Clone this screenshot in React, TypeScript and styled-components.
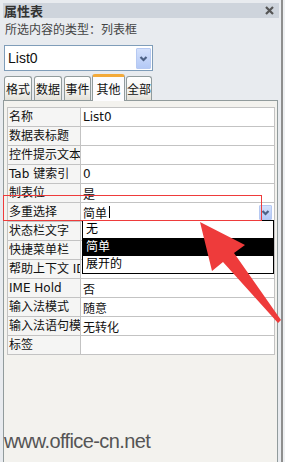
import React from 'react';
import styled, { createGlobalStyle } from 'styled-components';

const ui = {
  chrome: '#e8ebef',
  title: '#ced4dc',
  panel: '#f3f2ee',
  grid: '#c3c3c3',
  tabBorder: '#919b9c',
  red: '#ee3b3b',
  text: '#111',
  font: '"DejaVu Sans", "Noto Sans CJK SC", sans-serif',
  cjk: '"Noto Sans CJK SC", sans-serif',
};

const GlobalStyle = createGlobalStyle`
  body {
    margin: 0;
    background: ${ui.chrome};
  }
`;

const tabs = [
  { name: '格式', w: 28 },
  { name: '数据', w: 28 },
  { name: '事件', w: 27 },
  { name: '其他', w: 33, active: true },
  { name: '全部', w: 26 },
];

const rows: [string, string][] = [
  ['名称', 'List0'],
  ['数据表标题', ''],
  ['控件提示文本', ''],
  ['Tab 键索引', '0'],
  ['制表位', '是'],
  ['多重选择', '简单'],
  ['状态栏文字', ''],
  ['快捷菜单栏', ''],
  ['帮助上下文 ID', ''],
  ['IME Hold', '否'],
  ['输入法模式', '随意'],
  ['输入法语句模式', '无转化'],
  ['标签', ''],
];

const options = ['无', '简单', '展开的'];

const Chevron = ({ w, h }: { w: number; h: number }) => (
  <svg width={w} height={h} viewBox={`0 0 ${w} ${h}`}>
    <path
      d={`M${w / 2 - 3} ${h / 2 - 1.5} L${w / 2} ${h / 2 + 1.5} L${w / 2 + 3} ${h / 2 - 1.5}`}
      fill="none"
      stroke="#4d6185"
      strokeWidth="2.2"
    />
  </svg>
);

const App = () => {
  return (
    <>
      <GlobalStyle />
      <Frame>
        <Main>
          <TitleBar>
            <span>属性表</span>
            <svg width="9" height="9" viewBox="0 0 9 9">
              <path d="M1 1 L8 8 M8 1 L1 8" stroke="#555" strokeWidth="2.2" />
            </svg>
          </TitleBar>
          <TypeLabel>所选内容的类型：列表框</TypeLabel>
          <Combo>
            <span>List0</span>
            <ComboButton>
              <Chevron w={13} h={19} />
            </ComboButton>
          </Combo>
          <TabStrip>
            {tabs.map((t) => (
              <Tab key={t.name} $w={t.w} $active={!!t.active}>
                {t.name}
              </Tab>
            ))}
          </TabStrip>
          <Panel>
            <PropGrid>
              {rows.map(([label, value]) => (
                <React.Fragment key={label}>
                  <Label>{label}</Label>
                  {label === '多重选择' ? (
                    <Value>
                      {value}
                      <Caret />
                      <DropButton>
                        <Chevron w={11} h={13} />
                      </DropButton>
                      <DropList>
                        {options.map((o) => (
                          <DropItem key={o} $selected={o === value}>
                            {o}
                          </DropItem>
                        ))}
                      </DropList>
                    </Value>
                  ) : (
                    <Value>{value}</Value>
                  )}
                </React.Fragment>
              ))}
            </PropGrid>
          </Panel>
        </Main>
        <EdgeLine />
        <EdgeFill />

        <Highlight />
        <Pointer width="285" height="462" viewBox="0 0 285 462">
          <polygon
            points="200,222 245,245 234,253 281,320 278,323 223,262 212,271"
            fill={ui.red}
          />
        </Pointer>
        <Watermark>www.office-cn.net</Watermark>
      </Frame>
    </>
  );
};

export default App;

const Frame = styled.div`
  position: relative;
  display: flex;

  width: 285px;
  height: 462px;
  overflow: hidden;

  background: ${ui.chrome};
  font-family: ${ui.font};
  color: ${ui.text};
`;

const Main = styled.div`
  display: flex;
  flex-direction: column;
  width: 281px;
`;

const EdgeLine = styled.div`
  width: 2px;
  background: #8e8e8e;
`;

const EdgeFill = styled.div`
  flex: 1;
  background: #eef0f2;
`;

const TitleBar = styled.div`
  display: flex;
  align-items: center;
  justify-content: space-between;
  box-sizing: border-box;

  width: 276px;
  height: 15px;
  margin: 3px 0 0 3px;
  padding: 0 5px 0 1px;

  background: ${ui.title};
  font-family: ${ui.cjk};
  font-size: 13px;
  font-weight: 700;
  color: #333;
`;

const TypeLabel = styled.div`
  height: 24px;
  padding-left: 5px;

  font-size: 12px;
  line-height: 24px;
  color: #444;
`;

const Combo = styled.div`
  display: flex;
  align-items: center;
  justify-content: space-between;
  box-sizing: border-box;

  width: 149px;
  height: 26px;
  margin: 3px 0 0 4px;
  padding: 0 1px 0 3px;

  border: 1px solid #7f9db9;
  background: #fff;
  font-family: 'Liberation Sans', sans-serif;
  font-size: 14px;
`;

const ComboButton = styled.div`
  display: flex;
  box-sizing: border-box;
  width: 15px;
  height: 21px;

  border: 1px solid #b6c9f2;
  border-radius: 1px;
  background: linear-gradient(#d4e1fc, #b4c9f6);
`;

const TabStrip = styled.div`
  position: relative;
  z-index: 1;
  display: flex;
  align-items: flex-end;

  height: 27px;
  margin: 3px 0 -1px 4px;
`;

const Tab = styled.div<{ $w: number; $active: boolean }>`
  display: flex;
  align-items: center;
  justify-content: center;
  box-sizing: border-box;

  width: ${(p) => p.$w}px;
  height: ${(p) => (p.$active ? 27 : 24)}px;
  margin: ${(p) => (p.$active ? '0 1px 0 -1px' : '0 2px 1px 0')};
  padding-bottom: ${(p) => (p.$active ? 1 : 0)}px;

  border: 1px solid ${ui.tabBorder};
  border-bottom: none;
  border-top: ${(p) => (p.$active ? '3px solid #f3aa3a' : `1px solid ${ui.tabBorder}`)};
  border-radius: 3px 3px 0 0;
  background: ${(p) =>
    p.$active ? '#fcfcfe' : 'linear-gradient(#ffffff, #f4f3ef 60%, #e3e1d9)'};

  font-size: 12px;
`;

const Panel = styled.div`
  flex: 1;
  box-sizing: border-box;
  width: 275px;
  margin-left: 3px;
  padding: 6px 2px 0 3px;

  border: 1px solid ${ui.tabBorder};
  border-bottom: none;
  background: ${ui.panel};
`;

const PropGrid = styled.div`
  display: grid;
  grid-template-columns: 72px 1fr;
  gap: 1px;

  border: 1px solid ${ui.grid};
  background: ${ui.grid};
`;

const Label = styled.div`
  height: 18px;
  padding-left: 1px;
  overflow: hidden;

  background: #f5f5f4;
  font-size: 12px;
  line-height: 18px;
  white-space: nowrap;
`;

const Value = styled.div`
  position: relative;
  display: flex;
  align-items: center;

  height: 18px;
  padding-left: 2px;

  background: #fff;
  font-size: 12px;
  white-space: nowrap;
`;

const Caret = styled.span`
  width: 1px;
  height: 12px;
  margin-left: 2px;
  background: #000;
`;

const DropButton = styled.div`
  display: flex;
  box-sizing: border-box;
  width: 13px;
  height: 15px;
  margin: 0 2px 0 auto;

  border: 1px solid #b6c9f2;
  border-radius: 1px;
  background: linear-gradient(#d4e1fc, #b4c9f6);
`;

const DropList = styled.div`
  position: absolute;
  left: 1px;
  top: 17px;
  z-index: 2;
  width: 190px;

  border: 1px solid #000;
  background: #fff;
`;

const DropItem = styled.div<{ $selected: boolean }>`
  height: ${(p) => (p.$selected ? 18 : 17)}px;
  padding-left: 3px;

  font-size: 12px;
  line-height: ${(p) => (p.$selected ? 18 : 17)}px;
  color: ${(p) => (p.$selected ? '#fff' : '#000')};
  background: ${(p) => (p.$selected ? '#000' : '#fff')};
`;

const Highlight = styled.div`
  position: absolute;
  left: 3px;
  top: 195px;
  z-index: 3;
  box-sizing: border-box;
  width: 259px;
  height: 26px;

  border: 1.5px solid ${ui.red};
`;

const Pointer = styled.svg`
  position: absolute;
  left: 0;
  top: 0;
  z-index: 4;
  pointer-events: none;
`;

const Watermark = styled.div`
  position: absolute;
  left: 4px;
  top: 431px;
  z-index: 4;

  font-family: 'Liberation Sans', sans-serif;
  font-size: 20px;
  line-height: 20px;
  letter-spacing: -0.6px;
  color: #555;
`;
